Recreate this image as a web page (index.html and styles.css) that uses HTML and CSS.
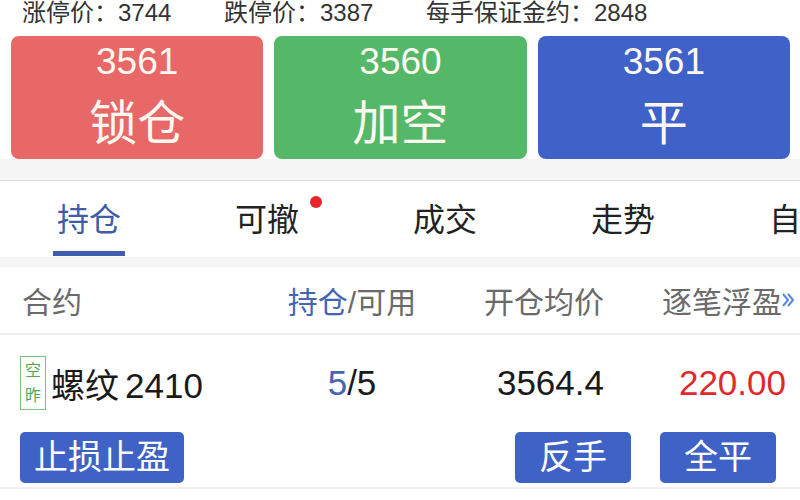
FILE: index.html
```html
<!DOCTYPE html>
<html lang="zh-CN">
<head>
<meta charset="utf-8">
<title>持仓</title>
<link rel="stylesheet" href="styles.css">
</head>
<body>
<div class="page">
  <div class="info">
    <span class="info-item">涨停价：3744</span>
    <span class="info-item">跌停价：3387</span>
    <span class="info-item">每手保证金约：2848</span>
  </div>

  <div class="quotes">
    <div class="quote quote-red">
      <div class="quote-price">3561</div>
      <div class="quote-label">锁仓</div>
    </div>
    <div class="quote quote-green">
      <div class="quote-price">3560</div>
      <div class="quote-label">加空</div>
    </div>
    <div class="quote quote-blue">
      <div class="quote-price">3561</div>
      <div class="quote-label">平</div>
    </div>
  </div>

  <div class="band band-top"></div>

  <nav class="tabs">
    <div class="tab tab-active"><span class="tab-label">持仓</span></div>
    <div class="tab"><span class="tab-label">可撤<span class="dot"></span></span></div>
    <div class="tab"><span class="tab-label">成交</span></div>
    <div class="tab"><span class="tab-label">走势</span></div>
    <div class="tab"><span class="tab-label">自选</span></div>
  </nav>

  <div class="band band-mid"></div>

  <div class="grid thead">
    <div class="c1">合约</div>
    <div class="c2"><span class="hl">持仓</span>/可用</div>
    <div class="c3">开仓均价</div>
    <div class="c4">逐笔浮盈</div>
    <div class="c5">
      <svg class="more" width="14" height="18" viewBox="0 0 14 18" aria-hidden="true">
        <path d="M2 3 L7 9 L2 15" fill="none" stroke="#5a86e0" stroke-width="2"/>
        <path d="M7 3 L12 9 L7 15" fill="none" stroke="#5a86e0" stroke-width="2"/>
      </svg>
    </div>
  </div>

  <div class="grid trow">
    <div class="c1 name-cell">
      <span class="tag"><span>空</span><span>昨</span></span>
      <span class="name">螺纹<span class="code">2410</span></span>
    </div>
    <div class="c2"><span class="hl">5</span>/5</div>
    <div class="c3">3564.4</div>
    <div class="c4 profit">220.00</div>
    <div class="c5"></div>
  </div>

  <div class="actions">
    <button class="act act-wide">止损止盈</button>
    <button class="act act-reverse">反手</button>
    <button class="act">全平</button>
  </div>
</div>
</body>
</html>
```

FILE: styles.css
```css
* {
  box-sizing: border-box;
}

html, body {
  margin: 0;
  padding: 0;
  background: #ffffff;
}

body {
  font-family: "Liberation Sans", "Noto Sans CJK SC", sans-serif;
  color: #222;
}

.page {
  width: 800px;
  height: 500px;
  overflow: hidden;
  background: #ffffff;
}

/* top info line */
.info {
  display: flex;
  height: 25px;
  line-height: 25px;
  margin-bottom: 11px;
  padding-left: 22px;
  font-size: 24px;
  color: #333;
  white-space: nowrap;
}

.info-item {
  width: 202px;
  flex-shrink: 0;
}

/* quote buttons */
.quotes {
  display: flex;
  gap: 11px;
  padding: 0 10px 0 11px;
  height: 123px;
}

.quote {
  flex: 1;
  border-radius: 8px;
  display: flex;
  flex-direction: column;
  align-items: center;
  padding-top: 6px;
  color: #fff8f0;
}

.quote-red { background: #e76866; }
.quote-green { background: #55b868; }
.quote-blue { background: #3f62c8; }

.quote-price {
  font-size: 37px;
  line-height: 40px;
  margin-bottom: 14px;
}

.quote-label {
  font-size: 48px;
  line-height: 56px;
}

/* separators */
.band {
  background: #f5f5f6;
}

.band-top {
  height: 22px;
  border-bottom: 1px solid #dddddd;
}

.band-mid {
  height: 10px;
}

/* tabs */
.tabs {
  display: flex;
  height: 76px;
  overflow: hidden;
  background: #fff;
}

.tab {
  width: 178px;
  flex-shrink: 0;
  display: flex;
  justify-content: center;
  position: relative;
  padding-top: 20px;
}

.tab-label {
  position: relative;
  font-size: 32px;
  line-height: 38px;
  height: 38px;
  color: #222;
  white-space: nowrap;
}

.tab-active .tab-label {
  color: #3f5ca9;
}

.tab-active::after {
  content: "";
  position: absolute;
  left: 53px;
  width: 72px;
  bottom: 1px;
  height: 5px;
  background: #3f5cb0;
}

.dot {
  position: absolute;
  right: -23px;
  top: -5px;
  width: 12px;
  height: 12px;
  border-radius: 50%;
  background: #e8252a;
}

/* table */
.grid {
  display: grid;
  grid-template-columns: 260px 184px 160px 182px 14px;
  align-items: center;
}

.thead {
  height: 68px;
  border-bottom: 2px solid #eeeeee;
  font-size: 30px;
  color: #6a6a6a;
  grid-template-columns: 260px 184px 160px 178px 18px;
}

.c1 {
  padding-left: 22px;
}

.c2 {
  text-align: center;
}

.c3, .c4 {
  text-align: right;
}

.c5 {
  display: flex;
  align-items: center;
}

.hl {
  color: #4464b4;
}

.more {
  display: block;
  margin-left: -1px;
}

.trow {
  height: 96px;
  font-size: 35px;
  color: #1a1a1a;
}

.name-cell {
  display: flex;
  align-items: center;
  padding-left: 20px;
}

.tag {
  display: flex;
  flex-direction: column;
  align-items: center;
  justify-content: center;
  width: 26px;
  height: 54px;
  border: 1.5px solid #7cc283;
  font-size: 16px;
  line-height: 25px;
  color: #52a85a;
}

.name {
  margin-left: 5px;
  font-size: 34px;
  white-space: nowrap;
}

.code {
  margin-left: 6px;
  font-size: 35px;
}

.profit {
  color: #e0282c;
}

/* action buttons */
.actions {
  display: flex;
  gap: 29px;
  height: 58px;
  padding: 1px 24px 0 20px;
  border-bottom: 2px solid #f0f0f0;
}

.act {
  height: 51px;
  width: 116px;
  border: none;
  border-radius: 5px;
  background: #3e62c5;
  color: #ffffff;
  font-family: "Liberation Sans", "Noto Sans CJK SC", sans-serif;
  font-size: 34px;
  line-height: 51px;
  padding: 0;
}

.act-wide {
  width: 164px;
  margin-right: auto;
}
```
